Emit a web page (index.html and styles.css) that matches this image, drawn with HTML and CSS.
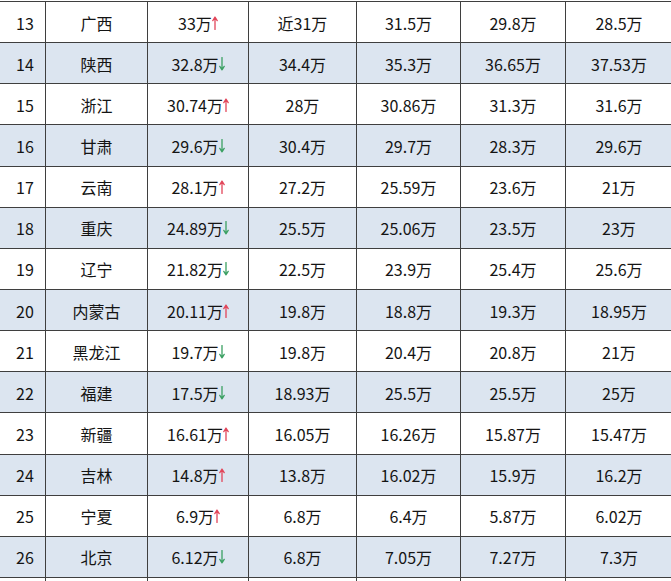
FILE: index.html
```html
<!DOCTYPE html>
<html lang="zh">
<head>
<meta charset="utf-8">
<title>表格</title>
<link rel="stylesheet" href="styles.css">
</head>
<body>
<div class="frame">
<div class="table">
  <div class="row"><div class="c first">13</div><div class="c">广西</div><div class="c">33万<svg class="arr up" viewBox="0 0 6 14"><path d="M3 13.5V1.2M0.8 4.6L3 1.2L5.2 4.6"/></svg></div><div class="c">近31万</div><div class="c">31.5万</div><div class="c">29.8万</div><div class="c">28.5万</div></div>
  <div class="row alt"><div class="c first">14</div><div class="c">陕西</div><div class="c">32.8万<svg class="arr down" viewBox="0 0 6 14"><path d="M3 0.5V12.8M0.8 9.4L3 12.8L5.2 9.4"/></svg></div><div class="c">34.4万</div><div class="c">35.3万</div><div class="c">36.65万</div><div class="c">37.53万</div></div>
  <div class="row"><div class="c first">15</div><div class="c">浙江</div><div class="c">30.74万<svg class="arr up" viewBox="0 0 6 14"><path d="M3 13.5V1.2M0.8 4.6L3 1.2L5.2 4.6"/></svg></div><div class="c">28万</div><div class="c">30.86万</div><div class="c">31.3万</div><div class="c">31.6万</div></div>
  <div class="row alt"><div class="c first">16</div><div class="c">甘肃</div><div class="c">29.6万<svg class="arr down" viewBox="0 0 6 14"><path d="M3 0.5V12.8M0.8 9.4L3 12.8L5.2 9.4"/></svg></div><div class="c">30.4万</div><div class="c">29.7万</div><div class="c">28.3万</div><div class="c">29.6万</div></div>
  <div class="row"><div class="c first">17</div><div class="c">云南</div><div class="c">28.1万<svg class="arr up" viewBox="0 0 6 14"><path d="M3 13.5V1.2M0.8 4.6L3 1.2L5.2 4.6"/></svg></div><div class="c">27.2万</div><div class="c">25.59万</div><div class="c">23.6万</div><div class="c">21万</div></div>
  <div class="row alt"><div class="c first">18</div><div class="c">重庆</div><div class="c">24.89万<svg class="arr down" viewBox="0 0 6 14"><path d="M3 0.5V12.8M0.8 9.4L3 12.8L5.2 9.4"/></svg></div><div class="c">25.5万</div><div class="c">25.06万</div><div class="c">23.5万</div><div class="c">23万</div></div>
  <div class="row"><div class="c first">19</div><div class="c">辽宁</div><div class="c">21.82万<svg class="arr down" viewBox="0 0 6 14"><path d="M3 0.5V12.8M0.8 9.4L3 12.8L5.2 9.4"/></svg></div><div class="c">22.5万</div><div class="c">23.9万</div><div class="c">25.4万</div><div class="c">25.6万</div></div>
  <div class="row alt"><div class="c first">20</div><div class="c">内蒙古</div><div class="c">20.11万<svg class="arr up" viewBox="0 0 6 14"><path d="M3 13.5V1.2M0.8 4.6L3 1.2L5.2 4.6"/></svg></div><div class="c">19.8万</div><div class="c">18.8万</div><div class="c">19.3万</div><div class="c">18.95万</div></div>
  <div class="row"><div class="c first">21</div><div class="c">黑龙江</div><div class="c">19.7万<svg class="arr down" viewBox="0 0 6 14"><path d="M3 0.5V12.8M0.8 9.4L3 12.8L5.2 9.4"/></svg></div><div class="c">19.8万</div><div class="c">20.4万</div><div class="c">20.8万</div><div class="c">21万</div></div>
  <div class="row alt"><div class="c first">22</div><div class="c">福建</div><div class="c">17.5万<svg class="arr down" viewBox="0 0 6 14"><path d="M3 0.5V12.8M0.8 9.4L3 12.8L5.2 9.4"/></svg></div><div class="c">18.93万</div><div class="c">25.5万</div><div class="c">25.5万</div><div class="c">25万</div></div>
  <div class="row"><div class="c first">23</div><div class="c">新疆</div><div class="c">16.61万<svg class="arr up" viewBox="0 0 6 14"><path d="M3 13.5V1.2M0.8 4.6L3 1.2L5.2 4.6"/></svg></div><div class="c">16.05万</div><div class="c">16.26万</div><div class="c">15.87万</div><div class="c">15.47万</div></div>
  <div class="row alt"><div class="c first">24</div><div class="c">吉林</div><div class="c">14.8万<svg class="arr up" viewBox="0 0 6 14"><path d="M3 13.5V1.2M0.8 4.6L3 1.2L5.2 4.6"/></svg></div><div class="c">13.8万</div><div class="c">16.02万</div><div class="c">15.9万</div><div class="c">16.2万</div></div>
  <div class="row"><div class="c first">25</div><div class="c">宁夏</div><div class="c">6.9万<svg class="arr up" viewBox="0 0 6 14"><path d="M3 13.5V1.2M0.8 4.6L3 1.2L5.2 4.6"/></svg></div><div class="c">6.8万</div><div class="c">6.4万</div><div class="c">5.87万</div><div class="c">6.02万</div></div>
  <div class="row alt"><div class="c first">26</div><div class="c">北京</div><div class="c">6.12万<svg class="arr down" viewBox="0 0 6 14"><path d="M3 0.5V12.8M0.8 9.4L3 12.8L5.2 9.4"/></svg></div><div class="c">6.8万</div><div class="c">7.05万</div><div class="c">7.27万</div><div class="c">7.3万</div></div>
  <div class="row"><div class="c first"></div><div class="c"></div><div class="c"></div><div class="c"></div><div class="c"></div><div class="c"></div><div class="c"></div></div>
</div>
</div>
</body>
</html>
```
FILE: styles.css
```css
html, body {
  margin: 0;
  padding: 0;
  background: #ffffff;
  overflow: hidden;
}
body {
  width: 671px;
  height: 581px;
  font-family: "Noto Sans CJK SC", "Noto Sans", sans-serif;
  font-size: 16px;
  color: #141414;
}
.frame {
  width: 671px;
  height: 581px;
  overflow: hidden;
}
.table {
  margin-top: 1px;
  border-top: 1px solid #3f3f3f;
  display: flex;
  flex-direction: column;
  gap: 1px;
  background: #3f3f3f;
  width: 671px;
}
.row {
  display: grid;
  grid-template-columns: 45px 101px 100px 107px 103px 104px 106px;
  column-gap: 1px;
  height: 40.15px;
}
.c {
  background: #ffffff;
  display: flex;
  align-items: center;
  justify-content: center;
  white-space: nowrap;
  line-height: 1;
  padding-top: 1px;
}
.row.alt .c {
  background: #dce5f0;
}
.first {
  padding-left: 5px;
}
.arr {
  width: 6px;
  height: 14px;
  fill: none;
  stroke-width: 1.3;
  stroke-linecap: round;
  stroke-linejoin: round;
}
.arr.up { stroke: #e2465a; }
.arr.down { stroke: #3ba063; }
```
